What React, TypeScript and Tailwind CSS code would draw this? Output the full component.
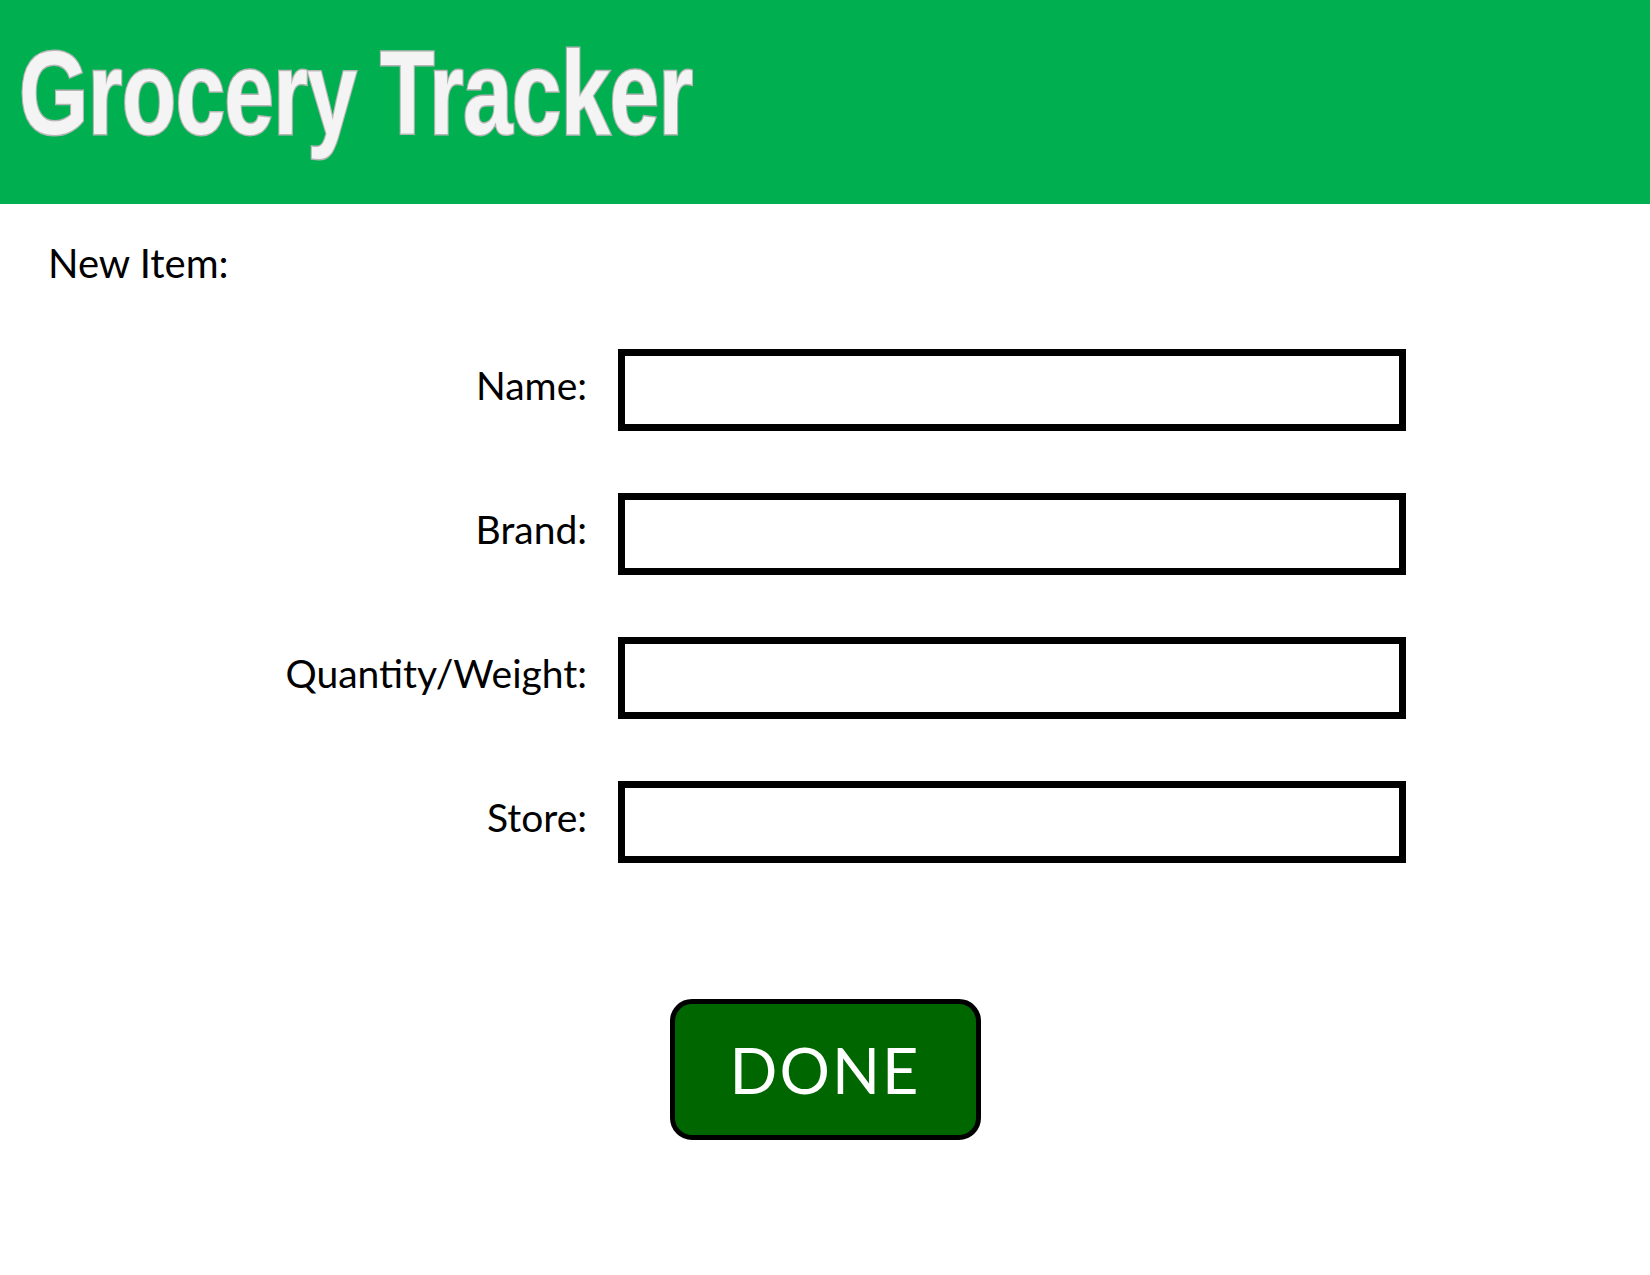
const fields = ["Name:", "Brand:", "Quantity/Weight:", "Store:"];

export default function App() {
  return (
    <div className="min-h-[1275px] w-[1650px] bg-white font-['Lato',sans-serif] text-black">
      <header className="h-[204px] bg-[#00b050] pl-[19px] pt-[33px]">
        <h1 className="inline-block origin-left scale-x-[0.75] font-['Liberation_Sans',Arial,sans-serif] text-[119px] font-bold leading-none tracking-[-1px] text-[#f4f4f4] [-webkit-text-stroke:3px_#b5b5b5] [paint-order:stroke_fill]">
          Grocery Tracker
        </h1>
      </header>

      <main className="flex flex-col">
        <p className="ml-[48px] mt-[39px] text-[40px] leading-none">New Item:</p>

        <form className="mt-[66px] grid grid-cols-[587px_788px] gap-x-[31px] gap-y-[62px]">
          {fields.map((label) => (
            <div key={label} className="contents">
              <label className="mb-[10px] self-center text-right text-[39px] leading-none">{label}</label>
              <input
                type="text"
                className="h-[82px] w-[788px] border-[7px] border-black bg-white outline-none"
              />
            </div>
          ))}
        </form>

        <div className="mt-[136px] flex justify-center">
          <button className="flex h-[141px] w-[311px] items-center justify-center rounded-[22px] border-[5px] border-black bg-[#006600] text-[63px] leading-none tracking-[2px] text-white">
            DONE
          </button>
        </div>
      </main>
    </div>
  );
}
